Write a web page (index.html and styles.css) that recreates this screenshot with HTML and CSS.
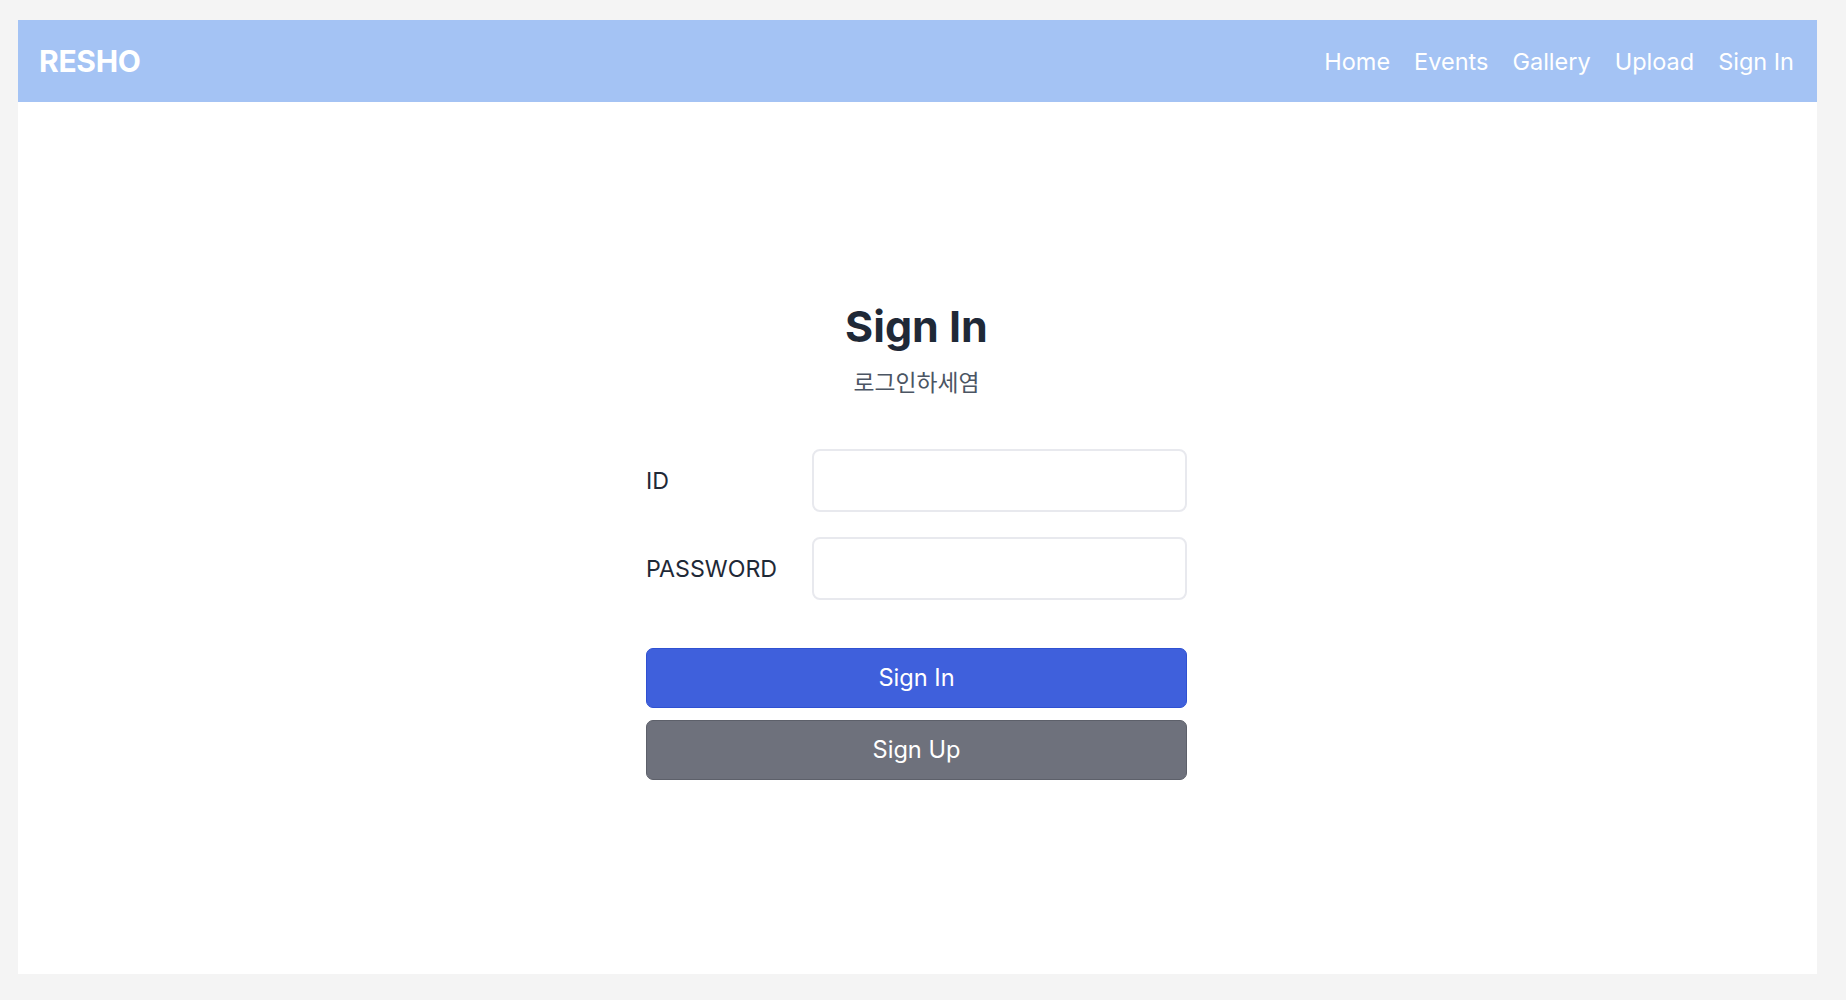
FILE: index.html
```html
<!DOCTYPE html>
<html lang="ko">
<head>
<meta charset="utf-8">
<title>RESHO - Sign In</title>
<link rel="stylesheet" href="styles.css">
</head>
<body>
<div class="card">
  <header class="navbar">
    <a class="logo" href="#">RESHO</a>
    <nav class="nav-links">
      <a href="#">Home</a>
      <a href="#">Events</a>
      <a href="#">Gallery</a>
      <a href="#">Upload</a>
      <a href="#">Sign In</a>
    </nav>
  </header>
  <main class="main">
    <section class="signin">
      <h1 class="title">Sign In</h1>
      <p class="subtitle">로그인하세염</p>
      <form class="form">
        <div class="row">
          <label class="label" for="id">ID</label>
          <input class="input" id="id" type="text">
        </div>
        <div class="row">
          <label class="label" for="pw">PASSWORD</label>
          <input class="input" id="pw" type="password">
        </div>
        <div class="actions">
          <button type="button" class="btn btn-primary">Sign In</button>
          <button type="button" class="btn btn-secondary">Sign Up</button>
        </div>
      </form>
    </section>
  </main>
</div>
</body>
</html>
```

FILE: styles.css
```css
* { box-sizing: border-box; }
html, body { height: 100%; }
body {
  margin: 0;
  background: #f4f4f4;
  font-family: Inter, "Noto Sans CJK KR", sans-serif;
  color: #1f2937;
}
.card {
  margin: 20px 29px 26px 18px;
  height: 954px;
  background: #ffffff;
  display: flex;
  flex-direction: column;
}
.navbar {
  height: 82px;
  flex: none;
  background: #a4c3f4;
  display: flex;
  align-items: center;
  justify-content: space-between;
  padding: 0 23px 0 21px;
}
.logo {
  color: #ffffff;
  text-decoration: none;
  font-weight: 700;
  font-size: 30px;
  letter-spacing: -0.3px;
}
.nav-links {
  display: flex;
  gap: 24px;
}
.nav-links a {
  color: #ffffff;
  text-decoration: none;
  font-size: 23.5px;
}
.main {
  flex: 1;
  display: flex;
  justify-content: center;
  padding-top: 199px;
  padding-right: 2px;
}
.signin {
  width: 541px;
  display: flex;
  flex-direction: column;
  align-items: center;
}
.title {
  margin: 0;
  font-size: 43px;
  line-height: 1.2;
  font-weight: 700;
  color: #1f2937;
}
.subtitle {
  margin: 16px 0 0;
  font-size: 22.8px;
  line-height: 28px;
  color: #4b5563;
}
.form {
  width: 100%;
  margin-top: 52px;
  display: flex;
  flex-direction: column;
  gap: 25px;
}
.row {
  display: flex;
  align-items: center;
}
.label {
  width: 166px;
  flex: none;
  font-size: 23.2px;
  color: #1f2937;
  padding-top: 2px;
}
.input {
  flex: 1;
  height: 63px;
  border: 2px solid #e8e9ee;
  border-radius: 8px;
  background: #ffffff;
  font: inherit;
  padding: 0 14px;
}
.actions {
  margin-top: 23px;
  display: flex;
  flex-direction: column;
  gap: 12px;
}
.btn {
  height: 60px;
  border-radius: 7px;
  font-family: Inter, sans-serif;
  font-size: 23.6px;
  color: #ffffff;
  cursor: pointer;
}
.btn-primary {
  background: #3f60dc;
  border: 1px solid #2f51d2;
}
.btn-secondary {
  background: #6e717c;
  border: 1px solid #5d606a;
}
```
